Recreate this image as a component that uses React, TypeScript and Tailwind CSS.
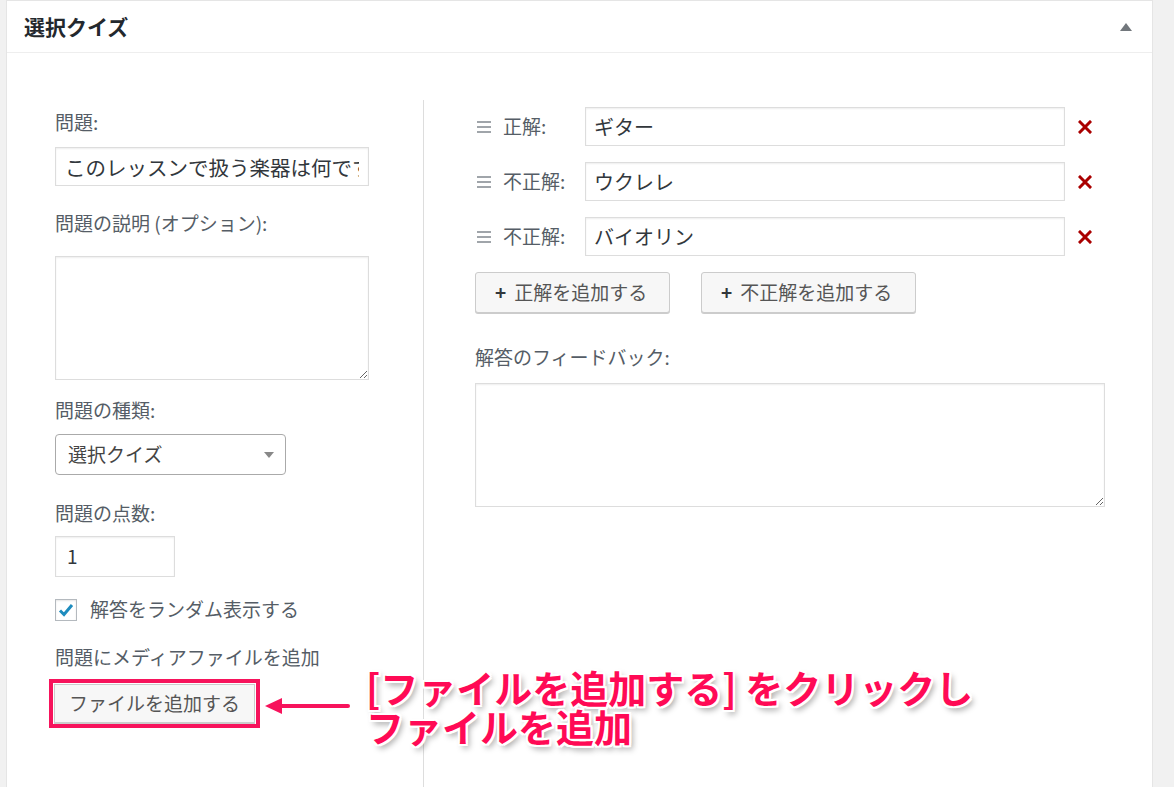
import React from 'react'

const font = { fontFamily: '"Noto Sans CJK JP", "Noto Sans", sans-serif' }

function Label({ children, className = '' }: { children: React.ReactNode; className?: string }) {
  return <div className={`text-[19px] leading-[24px] text-[#555d66] ${className}`}>{children}</div>
}

function Handle() {
  return (
    <div className="w-[28px] flex items-center pl-[2px]">
      <div className="flex flex-col gap-[3px] w-[14px]">
        <span className="block h-[2px] bg-[#a0a5aa]" />
        <span className="block h-[2px] bg-[#a0a5aa]" />
        <span className="block h-[2px] bg-[#a0a5aa]" />
      </div>
    </div>
  )
}

function AnswerRow({ label, value }: { label: string; value: string }) {
  return (
    <div className="flex items-center h-[39px]">
      <Handle />
      <div className="w-[82px] text-[19px] text-[#555d66]">{label}</div>
      <div className="w-[480px] h-[39px] border border-[#ddd] shadow-[inset_0_1px_2px_rgba(0,0,0,0.07)] px-[8px] flex items-center text-[20px] text-[#32373c]">
        {value}
      </div>
      <svg className="ml-[13px]" width="14" height="14" viewBox="0 0 14 14">
        <path d="M2 2 L12 12 M12 2 L2 12" stroke="#aa0000" strokeWidth="3" strokeLinecap="square" />
      </svg>
    </div>
  )
}

function AddButton({ text, width }: { text: string; width: string }) {
  return (
    <div
      className={`${width} h-[41px] bg-[#f7f7f7] border border-[#ccc] rounded-[3px] shadow-[0_1px_0_#ccc] flex items-center pl-[19px] text-[19px] text-[#555]`}
    >
      <span className="font-bold text-[#32373c] mr-[8px]">+</span>
      {text}
    </div>
  )
}

export default function App() {
  return (
    <div className="relative w-[1174px] h-[787px] bg-[#f1f1f1] overflow-hidden" style={font}>
      <div className="ml-[6px] w-[1147px] h-[800px] bg-white border border-[#e5e5e5]">
        <div className="h-[52px] border-b border-[#eee] flex items-center justify-between pl-[17px] pr-[20px]">
          <div className="text-[21px] font-bold text-[#23282d]">選択クイズ</div>
          <svg width="12" height="8" viewBox="0 0 12 8">
            <path d="M6 0 L12 8 L0 8 Z" fill="#72777c" />
          </svg>
        </div>

        <div className="flex pt-[47px] h-[760px]">
          {/* left column */}
          <div className="w-[416px] pl-[48px] pt-[10px]">
            <Label>問題:</Label>
            <input
              readOnly
              value="このレッスンで扱う楽器は何ですか？"
              className="mt-[13px] w-[314px] h-[39px] border border-[#ddd] shadow-[inset_0_1px_2px_rgba(0,0,0,0.07)] px-[9px] text-[20.5px] text-[#32373c] outline-none"
              style={font}
            />
            <Label className="mt-[25px]">問題の説明 (オプション):</Label>
            <textarea
              readOnly
              className="block mt-[21px] w-[314px] h-[124px] border border-[#ddd] shadow-[inset_0_1px_2px_rgba(0,0,0,0.07)] outline-none"
            />
            <Label className="mt-[18px]">問題の種類:</Label>
            <div className="mt-[12px] w-[231px] h-[41px] border border-[#aaa] rounded-[4px] flex items-center justify-between pl-[12px] pr-[11px] text-[19px] text-[#444]">
              <span>選択クイズ</span>
              <svg width="10" height="6" viewBox="0 0 10 6">
                <path d="M0 0 L10 0 L5 6 Z" fill="#888" />
              </svg>
            </div>
            <Label className="mt-[26px]">問題の点数:</Label>
            <div className="mt-[11px] w-[120px] h-[41px] border border-[#ddd] shadow-[inset_0_1px_2px_rgba(0,0,0,0.07)] flex items-center pl-[11px] text-[19px] text-[#32373c]">
              1
            </div>
            <div className="mt-[21px] flex items-center h-[23px]">
              <div className="w-[22px] h-[22px] border border-[#b4b9be] shadow-[inset_0_1px_2px_rgba(0,0,0,0.1)] flex items-center justify-center">
                <svg width="16" height="14" viewBox="0 0 16 14">
                  <path d="M2 7.5 L6 11.5 L14 2" stroke="#1e8cbe" strokeWidth="3" fill="none" />
                </svg>
              </div>
              <span className="ml-[13px] text-[19px] text-[#555d66]">解答をランダム表示する</span>
            </div>
            <Label className="mt-[24px]">問題にメディアファイルを追加</Label>
            <div className="mt-[10px] -ml-[6px] w-[211px] border-[4px] border-[#f7135c] p-px">
              <div className="h-[39px] bg-[#f7f7f7] border border-[#ccc] shadow-[0_1px_0_#ccc] flex items-center justify-center text-[19px] text-[#555]">
                ファイルを追加する
              </div>
            </div>
          </div>

          {/* right column */}
          <div className="flex-1 border-l border-[#ddd] pl-[51px] pt-[7px]">
            <div className="flex flex-col gap-[16px]">
              <AnswerRow label="正解:" value="ギター" />
              <AnswerRow label="不正解:" value="ウクレレ" />
              <AnswerRow label="不正解:" value="バイオリン" />
              <div className="flex gap-[31px]">
                <AddButton text="正解を追加する" width="w-[195px]" />
                <AddButton text="不正解を追加する" width="w-[215px]" />
              </div>
            </div>
            <Label className="mt-[32px]">解答のフィードバック:</Label>
            <textarea
              readOnly
              className="block mt-[14px] w-[630px] h-[124px] border border-[#ddd] shadow-[inset_0_1px_2px_rgba(0,0,0,0.07)] outline-none"
            />
          </div>
        </div>
      </div>

      {/* annotation overlay */}
      <svg className="absolute left-[262px] top-[695px]" width="90" height="22" viewBox="0 0 90 22">
        <path d="M16 11 L86 11" stroke="#f7135c" strokeWidth="4" strokeLinecap="round" />
        <path d="M3 11 L20 3 L20 19 Z" fill="#f7135c" />
      </svg>
      <div className="absolute left-[366px] top-[667px] text-[38px] leading-[39px] font-bold text-[#ff0a55] [text-shadow:2px_0_0_#fff,-2px_0_0_#fff,0_2px_0_#fff,0_-2px_0_#fff,2px_2px_0_#fff,-2px_-2px_0_#fff,2px_-2px_0_#fff,-2px_2px_0_#fff,3px_4px_6px_rgba(0,0,0,0.4)]">
        <div>[ファイルを追加する] をクリックし</div>
        <div>ファイルを追加</div>
      </div>
    </div>
  )
}
